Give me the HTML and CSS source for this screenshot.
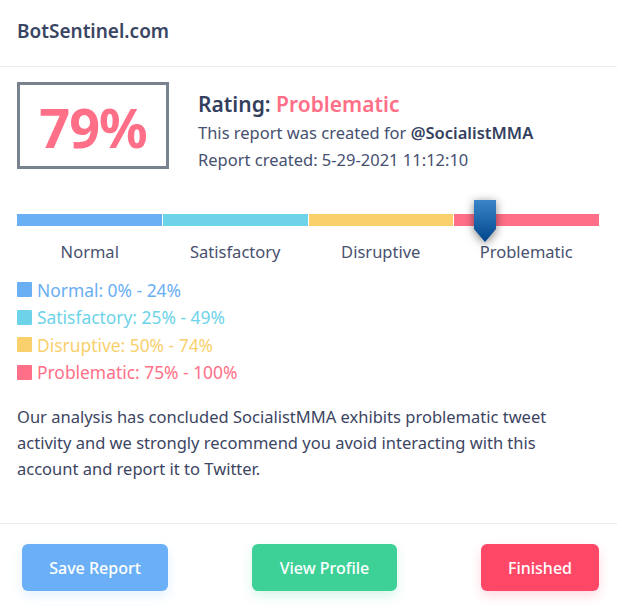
FILE: index.html
```html
<!DOCTYPE html>
<html lang="en">
<head>
<meta charset="utf-8">
<title>BotSentinel.com</title>
<link rel="stylesheet" href="styles.css">
</head>
<body>
<div class="modal">
  <div class="header">BotSentinel.com</div>
  <div class="content">
    <div class="summary">
      <div class="score-box">79%</div>
      <div class="rating">
        <div class="rating-title">Rating: <span class="pink">Problematic</span></div>
        <div class="rating-line">This report was created for <b>@SocialistMMA</b></div>
        <div class="rating-line">Report created: 5-29-2021 11:12:10</div>
      </div>
    </div>
    <div class="scale">
      <div class="bar">
        <div class="seg seg-blue"></div>
        <div class="seg seg-cyan"></div>
        <div class="seg seg-yellow"></div>
        <div class="seg seg-pink"></div>
        <svg class="marker" width="22" height="42" viewBox="0 0 22 42">
          <defs>
            <linearGradient id="mg" x1="0" y1="0" x2="0" y2="1">
              <stop offset="0" stop-color="#3a86c8"/>
              <stop offset="1" stop-color="#00468c"/>
            </linearGradient>
          </defs>
          <path d="M0 0H22V29L11 42L0 29Z" fill="url(#mg)"/>
        </svg>
      </div>
      <div class="labels">
        <div>Normal</div>
        <div>Satisfactory</div>
        <div>Disruptive</div>
        <div>Problematic</div>
      </div>
    </div>
    <ul class="legend">
      <li class="lg-blue"><span class="sq"></span>Normal: 0% - 24%</li>
      <li class="lg-cyan"><span class="sq"></span>Satisfactory: 25% - 49%</li>
      <li class="lg-yellow"><span class="sq"></span>Disruptive: 50% - 74%</li>
      <li class="lg-pink"><span class="sq"></span>Problematic: 75% - 100%</li>
    </ul>
    <p class="desc">Our analysis has concluded SocialistMMA exhibits problematic tweet activity and we strongly recommend you avoid interacting with this account and report it to Twitter.</p>
  </div>
  <div class="footer">
    <button class="btn btn-blue">Save Report</button>
    <button class="btn btn-green">View Profile</button>
    <button class="btn btn-red">Finished</button>
  </div>
</div>
</body>
</html>
```
FILE: styles.css
```css
* { box-sizing: border-box; }
html, body { margin: 0; padding: 0; background: #fff; }
body {
  font-family: "Noto Sans", "Open Sans", sans-serif;
  color: #3c4562;
  width: 617px;
}
.header {
  height: 67px;
  padding: 0 17px 4px;
  display: flex;
  align-items: center;
  font-size: 19px;
  font-weight: 600;
  color: #3a4563;
  border-bottom: 1px solid #ececf3;
}
.content {
  padding: 15px 18px 0 17px;
}
.summary {
  display: flex;
  gap: 29px;
}
.score-box {
  width: 152px;
  height: 87px;
  border: 3px solid #78838f;
  display: flex;
  align-items: center;
  justify-content: center;
  font-size: 54px;
  font-weight: 700;
  color: #ff6f87;
  letter-spacing: -1px;
  padding-top: 2px;
}
.rating { padding-top: 7px; }
.rating-title {
  font-size: 21px;
  font-weight: 600;
  color: #343f5e;
  line-height: 30px;
}
.pink { color: #ff6f87; }
.rating-line {
  font-size: 16.5px;
  line-height: 27px;
  color: #465070;
}
.rating-line b { font-weight: 600; color: #343f5e; }
.scale { margin-top: 41px; }
.bar {
  position: relative;
  display: grid;
  grid-template-columns: repeat(4, 1fr);
  gap: 1px;
  height: 12px;
}
.seg-blue { background: #6aaef4; }
.seg-cyan { background: #6dd3e9; }
.seg-yellow { background: #f9d06c; }
.seg-pink { background: #ff6f88; }
.marker {
  position: absolute;
  left: 457px;
  top: -14px;
  filter: drop-shadow(0 2px 5px rgba(0,0,0,0.5));
}
.labels {
  display: grid;
  grid-template-columns: repeat(4, 1fr);
  margin-top: 13px;
  font-size: 16.5px;
  line-height: 26px;
  color: #48516f;
  text-align: center;
}
.legend {
  list-style: none;
  margin: 11px 0 0;
  padding: 0;
  font-size: 17.4px;
}
.legend li {
  display: flex;
  align-items: center;
  height: 27.5px;
}
.sq {
  width: 15px;
  height: 15px;
  margin-right: 5px;
  border-radius: 1px;
}
.lg-blue { color: #6aaef4; }
.lg-blue .sq { background: #6aaef4; }
.lg-cyan { color: #6dd3e9; }
.lg-cyan .sq { background: #6dd3e9; }
.lg-yellow { color: #f9d06c; }
.lg-yellow .sq { background: #f9d06c; }
.lg-pink { color: #ff6f88; }
.lg-pink .sq { background: #ff6f88; }
.desc {
  margin: 18px 0 0;
  font-size: 16.5px;
  line-height: 26px;
  color: #3c4562;
  padding-bottom: 41px;
}
.footer {
  border-top: 1px solid #e9e9ee;
  padding: 20px 18px 20px 22px;
  display: flex;
  justify-content: space-between;
}
.btn {
  height: 47px;
  border: none;
  border-radius: 6px;
  color: #fff;
  font-family: inherit;
  font-size: 16px;
  font-weight: 500;
  padding: 0;
}
.btn-blue { width: 146px; background: #6bb0f6; box-shadow: 0 5px 12px rgba(107,176,246,0.18); }
.btn-green { width: 145px; background: #3dd198; box-shadow: 0 5px 12px rgba(61,209,152,0.2); }
.btn-red { width: 118px; background: #ff4867; box-shadow: 0 5px 12px rgba(255,72,103,0.2); }
```
